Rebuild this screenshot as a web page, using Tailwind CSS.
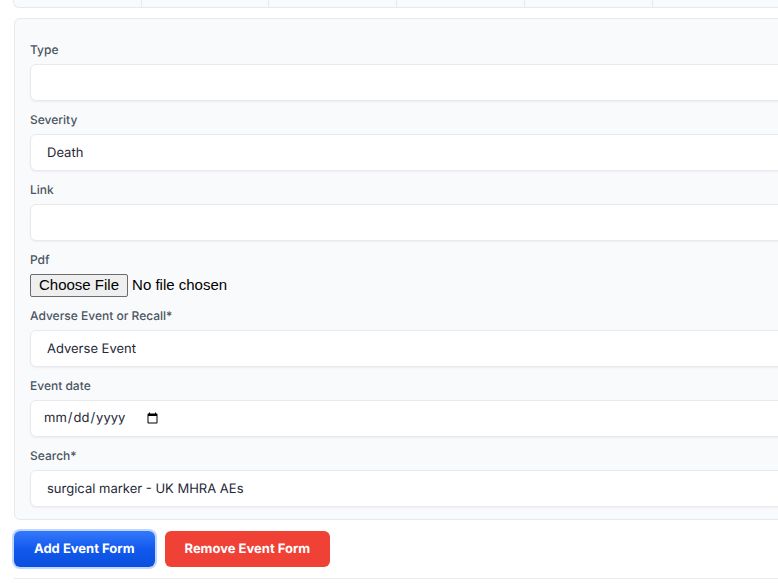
<!DOCTYPE html>
<html lang="en">
<head>
  <meta charset="UTF-8">
  <meta name="viewport" content="width=device-width, initial-scale=1.0">
  <title>Event Form</title>
  <script src="https://cdn.jsdelivr.net/npm/@tailwindcss/browser@4"></script>
</head>
<body class="bg-white font-['Inter',sans-serif] text-[#1f2937] overflow-x-hidden [text-rendering:geometricPrecision]">
  <main class="min-w-[908px] pl-3.5">

    <!-- Bottom edge of the summary row -->
    <div class="-ml-px grid grid-cols-7 h-2 bg-[#f9fafc] border-l border-b border-[#e7e9ed] rounded-bl-md divide-x divide-[#e7e9ed]">
      <div></div>
      <div></div>
      <div></div>
      <div></div>
      <div></div>
      <div></div>
      <div></div>
    </div>

    <form>
      <!-- Event fields -->
      <div class="mt-2.5 flex flex-col gap-[9px] px-[15px] pt-[21px] pb-3 bg-[#f9fafc] border border-[#e7e9ed] rounded-md">
        <div class="flex flex-col gap-1">
          <label for="type" class="text-xs leading-5 font-medium text-[#4b5563]">Type</label>
          <input type="text" id="type" class="h-[37px] px-3 text-[13px] bg-white border border-[#e7e9ed] rounded-md shadow-xs [text-rendering:inherit]">
        </div>

        <div class="flex flex-col gap-1">
          <label for="severity" class="text-xs leading-5 font-medium text-[#4b5563]">Severity</label>
          <select id="severity" class="appearance-none h-[37px] px-4 pt-0.5 text-[13px] bg-white border border-[#e7e9ed] rounded-md shadow-xs [text-rendering:inherit]">
            <option>Death</option>
          </select>
        </div>

        <div class="flex flex-col gap-1">
          <label for="link" class="text-xs leading-5 font-medium text-[#4b5563]">Link</label>
          <input type="url" id="link" class="h-[37px] px-3 text-[13px] bg-white border border-[#e7e9ed] rounded-md shadow-xs [text-rendering:inherit]">
        </div>

        <div class="flex flex-col gap-1">
          <label for="pdf" class="text-xs leading-5 font-medium text-[#4b5563]">Pdf</label>
          <input type="file" id="pdf" class="h-[23px] font-['Liberation_Sans',sans-serif] text-[15px] leading-[17px] text-black file:h-[23px] file:px-2 file:pb-0.5 file:mr-1 file:bg-[#efefef] file:border file:border-solid file:border-[#6b6b6b] file:rounded-xs">
        </div>

        <div class="flex flex-col gap-1">
          <label for="kind" class="text-xs leading-5 font-medium text-[#4b5563]">Adverse Event or Recall*</label>
          <select id="kind" class="appearance-none h-[37px] px-4 pt-0.5 text-[13px] bg-white border border-[#e7e9ed] rounded-md shadow-xs [text-rendering:inherit]">
            <option>Adverse Event</option>
          </select>
        </div>

        <div class="flex flex-col gap-1">
          <label for="event-date" class="text-xs leading-5 font-medium text-[#4b5563]">Event date</label>
          <input type="date" id="event-date" class="h-[37px] px-3 text-[13px] bg-white border border-[#e7e9ed] rounded-md shadow-xs [text-rendering:inherit] [&::-webkit-datetime-edit]:flex-none">
        </div>

        <div class="flex flex-col gap-1">
          <label for="search" class="text-xs leading-5 font-medium text-[#4b5563]">Search*</label>
          <select id="search" class="appearance-none h-[37px] px-4 pt-0.5 text-[13px] bg-white border border-[#e7e9ed] rounded-md shadow-xs [text-rendering:inherit]">
            <option>surgical marker - UK MHRA AEs</option>
          </select>
        </div>
      </div>

      <!-- Actions -->
      <div class="flex gap-2.5 py-[11px] border-b border-[#e7e9ed]">
        <button type="button" class="h-9 px-5 pt-0.5 rounded-md bg-linear-to-b from-[#3478f9] via-[#1159ee] to-[#0b4fdc] text-[13px] font-bold text-white ring-2 ring-[#bfd7fe] [text-rendering:inherit]">Add Event Form</button>
        <button type="button" class="h-9 px-5 pt-0.5 rounded-md bg-[#ef4136] text-[13px] font-bold text-white [text-rendering:inherit]">Remove Event Form</button>
      </div>
    </form>
  </main>
</body>
</html>
